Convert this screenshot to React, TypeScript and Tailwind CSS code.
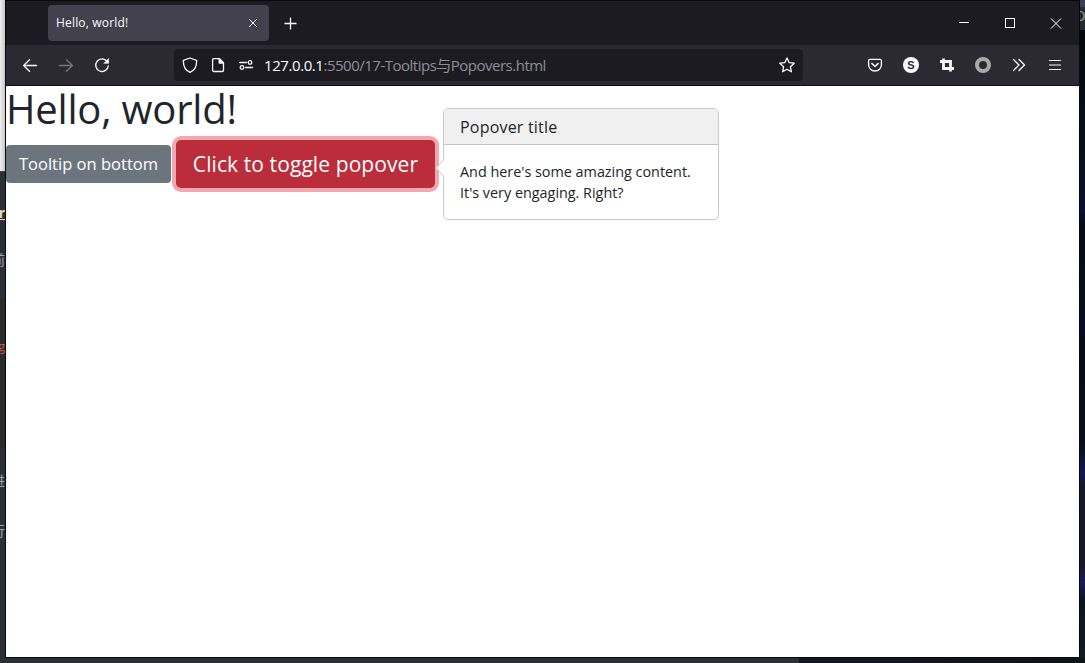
import React from "react";

const UI = "font-['Open_Sans','Noto_Sans','Noto_Sans_CJK_SC',sans-serif]";

function BackdropLeft() {
  return (
    <div className="flex w-[5px] shrink-0 flex-col overflow-hidden bg-[#2b3037] font-['Noto_Sans_CJK_SC',sans-serif] text-[14px] leading-[20px]">
      <div className="h-[171px] shrink-0 bg-gradient-to-r from-[#efefef] to-[#c8c8c8]" />
      <div className="h-[32px] shrink-0 border-t border-[#3b4047]" />
      <div className="flex h-[17px] w-[5px] shrink-0 justify-end overflow-hidden border-b border-[#d8d8d8] text-[#e8d5c0]">
        <span className="font-['Open_Sans',sans-serif] text-[14px] font-bold leading-[20px]">er</span>
      </div>
      <div className="flex h-[78px] w-[5px] shrink-0 justify-start overflow-hidden pt-[29px] text-[#9ba4ad]">
        <span className="-ml-[9px]">前</span>
      </div>
      <div className="flex h-[150px] w-[5px] shrink-0 justify-end overflow-hidden bg-[#2b2b2b] pt-[38px] text-[#c75450]">
        <span className="font-['Open_Sans',sans-serif] text-[13px]">g</span>
      </div>
      <div className="flex h-[72px] w-[5px] shrink-0 justify-end overflow-hidden pt-[22px] text-[#a0a6ac]">
        <span>进</span>
      </div>
      <div className="flex w-[5px] shrink-0 justify-end overflow-hidden text-[#a0a6ac]">
        <span>行</span>
      </div>
    </div>
  );
}

function BackdropRight() {
  return (
    <div className="flex w-[5px] shrink-0 flex-col overflow-hidden">
      <div className="h-[7px] bg-[#3b404c]" />
      <div className="flex h-[16px] items-center justify-start overflow-hidden bg-[#252b35] text-[#8aa0a0]">
        <span className="-ml-1.5 font-['Open_Sans',sans-serif] text-[15px]">O</span>
      </div>
      <div className="h-[7px] bg-[#232a33]" />
      <div className="flex-1 bg-[linear-gradient(180deg,#04080e_0%,#06101a_20%,#0a0f35_29%,#050c16_31%,#050d18_45%,#08092f_47%,#050c16_50%,#070d1a_66%,#10184e_70%,#151827_73%,#151626_85%,#1b1b58_88%,#0a1520_91%,#101a22_100%)]" />
    </div>
  );
}

function TabBar() {
  return (
    <div className="flex h-[44px] shrink-0 items-start bg-[#1c1b22] text-[#fbfbfe]">
      <div className="ml-[42px] mt-1 flex h-[36px] w-[221px] items-center justify-between rounded bg-[#42414d] pl-2 pr-[11px]">
        <span className="text-[12px] leading-[18px] tracking-[0.18px]">Hello, world!</span>
        <svg width="10" height="10" viewBox="0 0 10 10" fill="none" stroke="currentColor">
          <path d="M1 1l8 8M9 1L1 9" />
        </svg>
      </div>
      <svg className="ml-[15px] mt-[16px]" width="13" height="13" viewBox="0 0 13 13" fill="none" stroke="currentColor" strokeWidth="1.3">
        <path d="M6.5.5v12M.5 6.5h12" />
      </svg>
      <div className="ml-auto mr-[17px] mt-[16px] flex gap-[34px]">
        <svg width="12" height="12" viewBox="0 0 12 12" fill="none" stroke="currentColor" shapeRendering="crispEdges">
          <path d="M1 5.5h10" />
        </svg>
        <svg width="12" height="12" viewBox="0 0 12 12" fill="none" stroke="currentColor" shapeRendering="crispEdges">
          <path d="M1.5 1.5h9v9h-9z" />
        </svg>
        <svg width="12" height="12" viewBox="0 0 12 12" fill="none" stroke="currentColor">
          <path d="M1 1.5l10 10M11 1.5L1 11.5" />
        </svg>
      </div>
    </div>
  );
}

function Icon({ children, className = "" }: { children: React.ReactNode; className?: string }) {
  return (
    <svg className={`shrink-0 ${className}`} width="16" height="16" viewBox="0 0 16 16" fill="none" stroke="currentColor" strokeWidth="1.3" strokeLinecap="round" strokeLinejoin="round">
      {children}
    </svg>
  );
}

function Toolbar() {
  return (
    <div className="flex h-[41px] shrink-0 items-center border-b border-[#0c0c0d] bg-[#2b2a33] text-[#fbfbfe]">
      <div className="ml-4 flex w-[152px] gap-5">
        <Icon><path d="M1.5 8.5h13M7.5 2.8L1.6 8.5l5.9 5.7" /></Icon>
        <Icon className="text-[#75747b]"><path d="M1.5 8.5h13M8.5 2.8l5.9 5.7-5.9 5.7" /></Icon>
        <Icon>
          <path d="M13.2 4.6A6.3 6.3 0 1 0 14.3 9" />
          <path d="M14.6 1.8v4.5h-4.5z" fill="currentColor" strokeWidth=".6" />
        </Icon>
      </div>
      <div className="flex h-8 w-[629px] items-center rounded bg-[#1c1b22] pl-2">
        <Icon><path d="M8 1L14.6 3.4C14.9 8.5 13 13.2 8 15.4 3 13.2 1.1 8.5 1.4 3.4z" /></Icon>
        <Icon className="ml-3">
          <path d="M3.8 1.7h5.6l4.1 4.1v7.5c0 .7-.5 1.2-1.2 1.2H3.8c-.7 0-1.2-.5-1.2-1.2V2.9c0-.7.5-1.2 1.2-1.2z" />
          <path d="M9.2 2v4h4z" fill="currentColor" />
        </Icon>
        <Icon className="ml-3">
          <path d="M1.5 5.5h7M7.5 10.5h7" />
          <circle cx="12" cy="5.5" r="1.8" />
          <circle cx="4" cy="10.5" r="1.8" />
        </Icon>
        <span className="mb-px ml-[10px] whitespace-nowrap text-[15px] leading-5 tracking-[-0.5px] text-[#8f8f98]">
          <span className="tracking-[-0.42px] text-[#fbfbfe]">127.0.0.1</span>:5500/17-Tooltips与Popovers.html
        </span>
        <Icon className="ml-auto mr-2">
          <path d="M8 .9l2.1 4.7 5.1.6-3.8 3.5 1 5.1L8 12.3l-4.4 2.5 1-5.1L.8 6.2l5.1-.6z" />
        </Icon>
      </div>
      <div className="ml-auto mr-4 flex gap-5">
        <Icon>
          <path d="M3 2.3h10c.8 0 1.4.6 1.4 1.4v4.1c0 3.4-2.8 6.2-6.4 6.2S1.6 11.2 1.6 7.8V3.7C1.6 2.9 2.2 2.3 3 2.3z" />
          <path d="M4.9 6.5L8 9.5l3.1-3" strokeWidth="1.6" />
        </Icon>
        <span className="flex size-4 items-center justify-center rounded-full bg-[#fbfbfe] font-['Liberation_Sans',sans-serif] text-[11px] font-bold leading-none text-[#2b2a33]">S</span>
        <Icon>
          <path d="M1 4.5h10.5v10M4.5 1.5v10H15" strokeWidth="2.8" strokeLinecap="butt" strokeLinejoin="miter" />
        </Icon>
        <Icon className="text-[#a9a9a9]"><circle cx="8" cy="8" r="6" strokeWidth="4" /></Icon>
        <Icon><path d="M2.5 2.5L8 8l-5.500 5.500M8 2.500L13.500 8 8 13.500" /></Icon>
        <Icon><path d="M2.500 3.500h11M2.500 8h11M2.500 12.500h11" strokeWidth="1.1" /></Icon>
      </div>
    </div>
  );
}

function Popover() {
  return (
    <div className="absolute left-[437px] top-[22px] w-[276px] rounded-[5px] border border-[#c9c9c9] bg-white text-[#212529]">
      <svg className="absolute -left-[9px] top-[50px]" width="9" height="18" viewBox="0 0 9 18">
        <path d="M9 .5L1 9l8 8.500" fill="#fff" stroke="#c4c4c4" />
      </svg>
      <h3 className="h-[36px] rounded-t border-b border-[#c4c4c4] bg-[#f0f0f0] pl-4 text-[16px] leading-[36px] tracking-[0.2px]">Popover title</h3>
      <div className="h-[74px] whitespace-nowrap pl-4 pt-4 text-[14.4px] leading-[21px] tracking-[-0.01px]">
        And here's some amazing content.
        <br />
        It's very engaging. Right?
      </div>
    </div>
  );
}

function Page() {
  return (
    <main className="relative flex-1 bg-white">
      <h1 className="h-[54px] whitespace-nowrap text-[40px] leading-[46px] tracking-[-0.2px] text-[#212529]">Hello, world!</h1>
      <div className="flex items-start gap-[5px]">
        <button className="mt-[5px] h-[38px] w-[165px] whitespace-nowrap rounded bg-[#6c757d] text-[16.5px] leading-[38px] tracking-[0.02px] text-white">Tooltip on bottom</button>
        <button className="h-[48px] w-[259px] whitespace-nowrap rounded-[5px] bg-[#bb2d3b] text-[21px] leading-[48px] tracking-[0.09px] text-white shadow-[0_0_0_4px_#f1a8b0]">Click to toggle popover</button>
      </div>
      <Popover />
    </main>
  );
}

export default function App() {
  return (
    <div className={`flex h-[663px] w-[1085px] flex-col overflow-hidden bg-[#2b3037] ${UI}`}>
      <div className="flex h-[658px] shrink-0">
        <BackdropLeft />
        <div className="flex w-[1075px] shrink-0 flex-col border border-[#08080a]">
          <TabBar />
          <Toolbar />
          <Page />
        </div>
        <BackdropRight />
      </div>
      <div className="flex h-[5px]">
        <div className="w-[799px] bg-[#2b3037]" />
        <div className="flex-1 bg-gradient-to-r from-[#151625] to-[#0b1417]" />
      </div>
    </div>
  );
}
